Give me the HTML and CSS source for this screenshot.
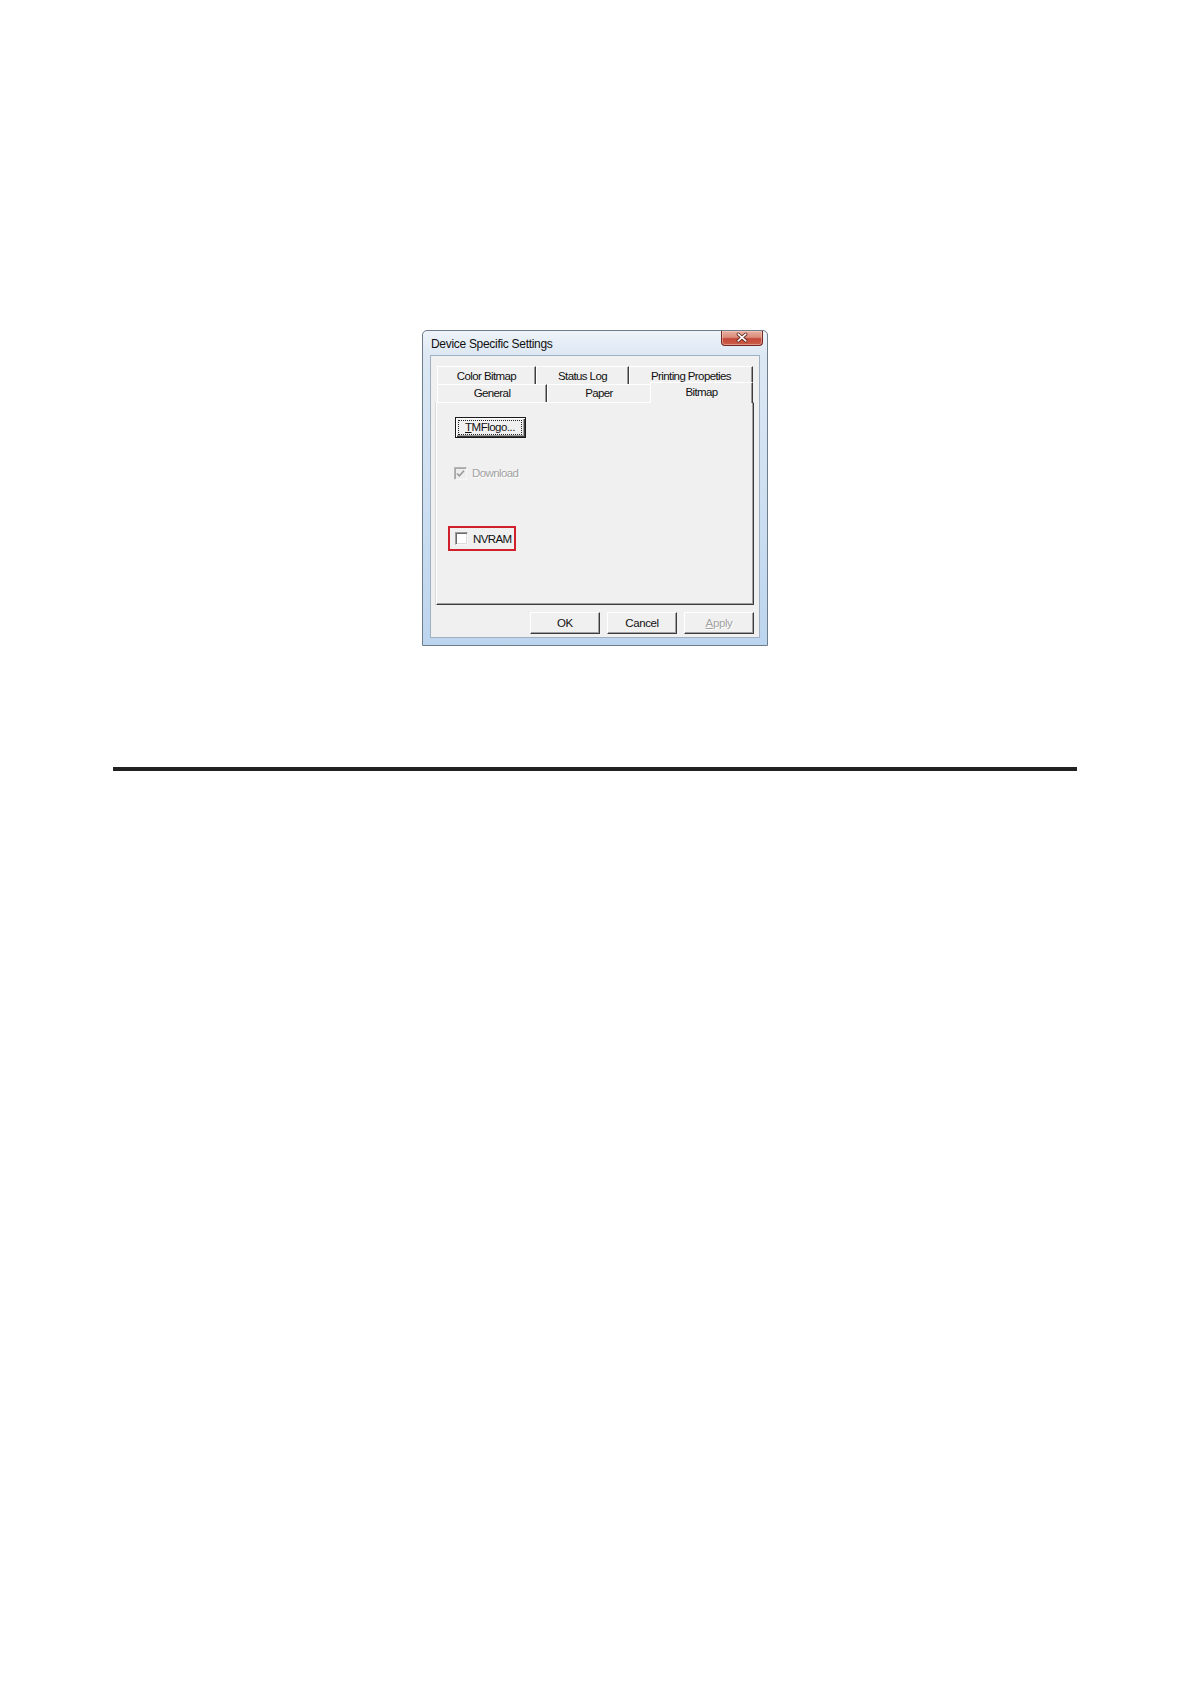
FILE: index.html
```html
<!DOCTYPE html>
<html lang="en">
<head>
<meta charset="utf-8">
<title>Device Specific Settings</title>
<link rel="stylesheet" href="styles.css">
</head>
<body>
<div class="page">
  <div class="dialog">
    <div class="titlebar">
      <span class="title">Device Specific Settings</span>
      <div class="close">
        <svg width="42" height="15" viewBox="0 0 42 15">
          <path d="M17 4 L25 11 M25 4 L17 11" stroke="#5b1d14" stroke-width="3.4" stroke-linecap="round" fill="none"/>
          <path d="M17 4 L25 11 M25 4 L17 11" stroke="#ffffff" stroke-width="1.8" stroke-linecap="round" fill="none"/>
        </svg>
      </div>
    </div>
    <div class="client">
      <div class="tabs">
        <div class="tabrow back">
          <div class="tab w-color">Color Bitmap</div>
          <div class="tab w-status">Status Log</div>
          <div class="tab w-print">Printing Propeties</div>
        </div>
        <div class="tabrow front">
          <div class="tab w-general">General</div>
          <div class="tab w-paper noright">Paper</div>
          <div class="tab w-bitmap sel">Bitmap</div>
        </div>
      </div>
      <div class="panel">
        <div class="btn default logo"><span class="focus"><u>T</u>MFlogo...</span></div>
        <div class="check-row disabled">
          <span class="box checked">
            <svg width="11" height="11" viewBox="0 0 11 11"><path d="M2 5.5 L4.3 7.8 L9 2.8" stroke="#9a9a9a" stroke-width="1.6" fill="none"/></svg>
          </span>
          <span class="label">Download</span>
        </div>
        <div class="highlight">
          <div class="check-row">
            <span class="box"></span>
            <span class="label">NVRAM</span>
          </div>
        </div>
      </div>
      <div class="buttons">
        <div class="btn">OK</div>
        <div class="btn">Cancel</div>
        <div class="btn disabled-btn"><u>A</u>pply</div>
      </div>
    </div>
  </div>
  <div class="rule"></div>
</div>
</body>
</html>
```

FILE: styles.css
```css
html, body {
  margin: 0;
  padding: 0;
  background: #ffffff;
}

.page {
  padding-top: 330px;
  font-family: "Liberation Sans", Arial, sans-serif;
}

.dialog {
  width: 346px;
  height: 316px;
  box-sizing: border-box;
  margin: 0 auto;
  border: 1px solid #6f7c8a;
  border-radius: 5px 5px 0 0;
  background: linear-gradient(to bottom, #eef3f9 0px, #dde8f4 24px, #cfe0f2 160px, #bcd5ee 315px);
  padding: 0 7px 7px 7px;
  display: flex;
  flex-direction: column;
}

.titlebar {
  height: 24px;
  display: flex;
  justify-content: space-between;
  align-items: flex-start;
}

.title {
  font-size: 12px;
  letter-spacing: -0.3px;
  line-height: 14px;
  padding-top: 6px;
  padding-left: 1px;
  color: #111;
}

.close {
  width: 42px;
  height: 15px;
  margin-top: 0;
  margin-right: -3px;
  box-sizing: border-box;
  border: 1px solid #6e2a22;
  border-top: none;
  border-radius: 0 0 4px 4px;
  background: linear-gradient(to bottom, #e9aea0 0%, #da8d7b 45%, #c4483a 55%, #cc5f48 100%);
  box-shadow: inset 0 0 0 1px rgba(255, 220, 210, 0.45);
  display: flex;
  align-items: center;
  justify-content: center;
}

.close svg {
  display: block;
  margin-top: -1px;
}

.client {
  flex: 1;
  box-sizing: border-box;
  border: 1px solid #9fb0c3;
  background: #f0f0f0;
  padding: 10px 5px 3px 5px;
  display: flex;
  flex-direction: column;
}

.tabs {
  display: flex;
  flex-direction: column;
  padding-left: 1px;
}

.tabrow {
  display: flex;
  height: 18px;
}

.tab {
  box-sizing: border-box;
  height: 18px;
  display: flex;
  align-items: center;
  justify-content: center;
  font-size: 11.5px;
  letter-spacing: -0.6px;
  color: #111;
  border-top: 1px solid #ffffff;
  border-left: 1px solid #ffffff;
  border-right: 1px solid #3c3c3c;
  box-shadow: inset -1px 0 0 #9a9a9a;
  background: #f0f0f0;
}

.tabrow.front .tab {
  padding-bottom: 2px;
}

.w-color { width: 99px; }
.w-status { width: 93px; }
.w-print { width: 124px; }
.w-general { width: 110px; }
.w-paper { width: 103px; }
.w-bitmap { width: 103px; }

.tab.noright {
  border-right: none;
  box-shadow: none;
}

.tab.sel {
  height: 21px;
  margin-top: -2px;
  padding-bottom: 3px;
  position: relative;
  z-index: 1;
}

.panel {
  height: 203px;
  box-sizing: border-box;
  border-top: 1px solid #ffffff;
  border-left: 1px solid #ffffff;
  border-right: 1px solid #3c3c3c;
  border-bottom: 1px solid #3c3c3c;
  box-shadow: inset -1px -1px 0 #a0a0a0, -1px 0 0 #d9d9d9;
  display: flex;
  flex-direction: column;
  align-items: flex-start;
  padding: 14px 0 0 11px;
}

.btn {
  width: 70px;
  height: 22px;
  box-sizing: border-box;
  background: #f0f0f0;
  border: 1px solid;
  border-color: #ffffff #3c3c3c #3c3c3c #ffffff;
  box-shadow: inset -1px -1px 0 #a0a0a0;
  display: flex;
  align-items: center;
  justify-content: center;
  font-size: 11.5px;
  letter-spacing: -0.4px;
  color: #111;
}

.btn.default {
  width: 71px;
  height: 21px;
  margin-left: 7px;
  border: 1px solid #1a1a1a;
  box-shadow: inset 1px 1px 0 #ffffff, inset -1px -1px 0 #3c3c3c, inset -2px -2px 0 #a0a0a0;
}

.focus {
  box-sizing: border-box;
  width: 64px;
  height: 15px;
  border: 1px dotted #222;
  display: flex;
  align-items: center;
  justify-content: center;
  letter-spacing: -0.5px;
  margin-left: -1px;
  margin-top: -1px;
}

.check-row {
  display: flex;
  align-items: center;
  height: 14px;
}

.panel > .check-row {
  margin-top: 28px;
  margin-left: 6px;
}

.box {
  width: 13px;
  height: 13px;
  box-sizing: border-box;
  border: 1px solid;
  border-color: #9c9c9c #f6f6f6 #f6f6f6 #9c9c9c;
  box-shadow: inset 1px 1px 0 #6a6a6a, inset -1px -1px 0 #dcdcdc;
  background: #ffffff;
  display: flex;
  align-items: center;
  justify-content: center;
}

.box.checked {
  background: #eeeeee;
  border-color: #b4b4b4 #f6f6f6 #f6f6f6 #b4b4b4;
  box-shadow: inset 1px 1px 0 #a8a8a8;
}

.box svg {
  display: block;
}

.label {
  margin-left: 5px;
  font-size: 11.5px;
  letter-spacing: -0.6px;
  color: #111;
}

.disabled .label {
  color: #a2a2a2;
  text-shadow: 1px 1px 0 #ffffff;
}

.highlight {
  margin-top: 46px;
  width: 68px;
  height: 25px;
  box-sizing: border-box;
  border: 2px solid #d0202c;
  display: flex;
  align-items: center;
  padding-left: 5px;
}

.buttons {
  margin-top: 7px;
  display: flex;
  justify-content: flex-end;
  gap: 7px;
}

.disabled-btn {
  color: #a2a2a2;
  text-shadow: 1px 1px 0 #ffffff;
}

.rule {
  width: 964px;
  height: 4px;
  margin: 121px auto 0 auto;
  background: #222222;
}
```
